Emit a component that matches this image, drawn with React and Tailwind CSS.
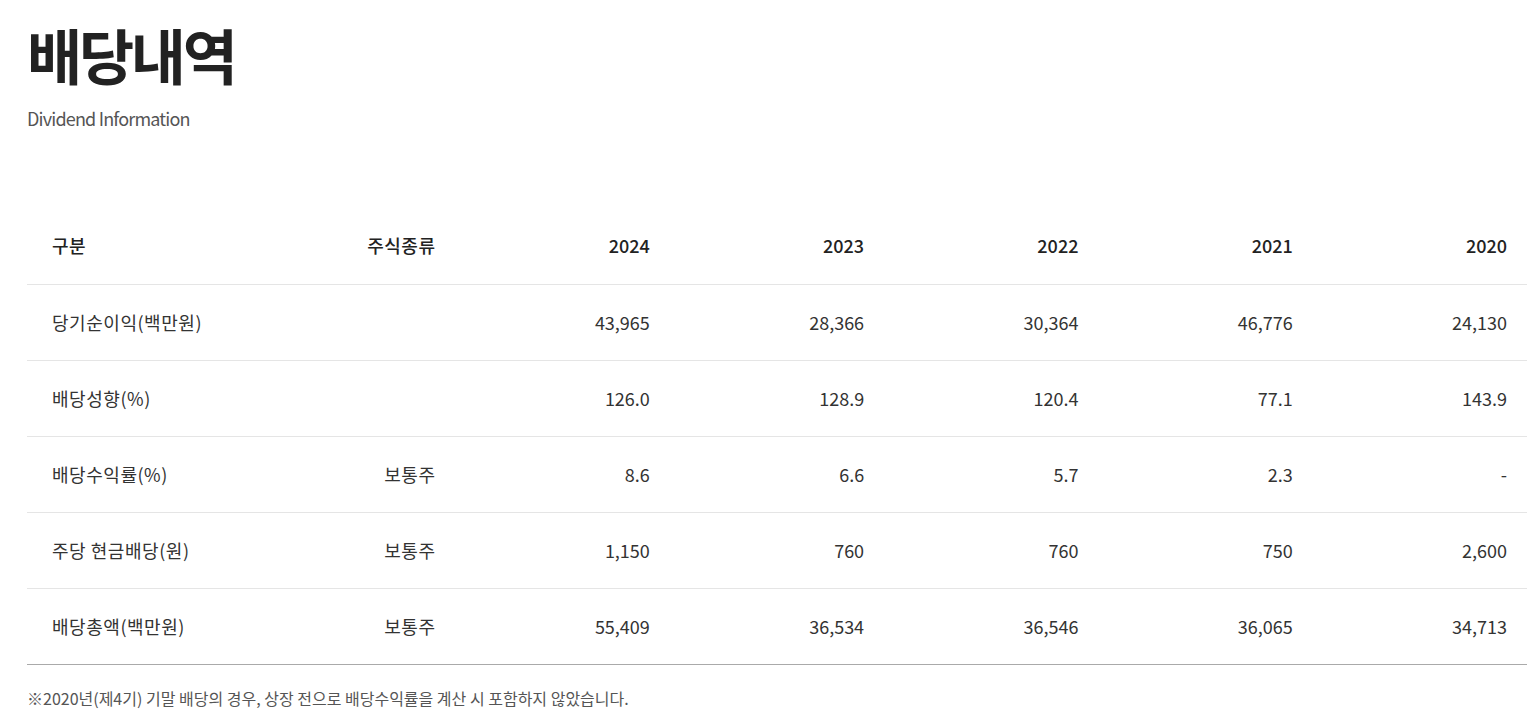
const columns = ['구분', '주식종류', '2024', '2023', '2022', '2021', '2020']

const rows = [
  { label: '당기순이익(백만원)', type: '', values: ['43,965', '28,366', '30,364', '46,776', '24,130'] },
  { label: '배당성향(%)', type: '', values: ['126.0', '128.9', '120.4', '77.1', '143.9'] },
  { label: '배당수익률(%)', type: '보통주', values: ['8.6', '6.6', '5.7', '2.3', '-'] },
  { label: '주당 현금배당(원)', type: '보통주', values: ['1,150', '760', '760', '750', '2,600'] },
  { label: '배당총액(백만원)', type: '보통주', values: ['55,409', '36,534', '36,546', '36,065', '34,713'] },
]

const FONT = { fontFamily: '"Noto Sans CJK KR", "Noto Sans", sans-serif' }

export default function App() {
  return (
    <div className="min-h-screen bg-white text-[#333] px-[27px] pt-[14px]" style={FONT}>
      <h1 className="text-[60px] font-bold leading-[80px] tracking-[-0.055em] text-[#222]">배당내역</h1>
      <p className="mt-[13px] text-[18px] leading-[22px] tracking-[-0.045em] text-[#555]">Dividend Information</p>

      <table className="mt-[79px] w-[1500px] table-fixed border-collapse">
        <thead>
          <tr className="h-[76px] border-b border-[#e5e5e5]">
            {columns.map((c, i) => (
              <th key={c}
                className={(i === 0 ? 'pl-[25px] text-left' : 'pr-[20px] text-right') + (i < 2 ? ' tracking-[0.03em]' : ' tracking-normal') + ' text-[18px] font-medium text-[#222]'}>
                {c}
              </th>
            ))}
          </tr>
        </thead>
        <tbody>
          {rows.map((r, ri) => (
            <tr key={r.label}
              className={'h-[76px] border-b ' + (ri === rows.length - 1 ? 'border-[#aaa]' : 'border-[#e5e5e5]')}>
              <td className="pl-[25px] text-left text-[18px] tracking-[0.03em]">{r.label}</td>
              <td className="pr-[20px] text-right text-[18px] tracking-[0.03em]">{r.type}</td>
              {r.values.map((v, vi) => (
                <td key={vi} className="pr-[20px] text-right text-[18px] tracking-normal">{v}</td>
              ))}
            </tr>
          ))}
        </tbody>
      </table>

      <p className="mt-[22px] text-[16px] leading-[22px] tracking-normal text-[#555]">
        ※2020년(제4기) 기말 배당의 경우, 상장 전으로 배당수익률을 계산 시 포함하지 않았습니다.
      </p>
    </div>
  )
}
